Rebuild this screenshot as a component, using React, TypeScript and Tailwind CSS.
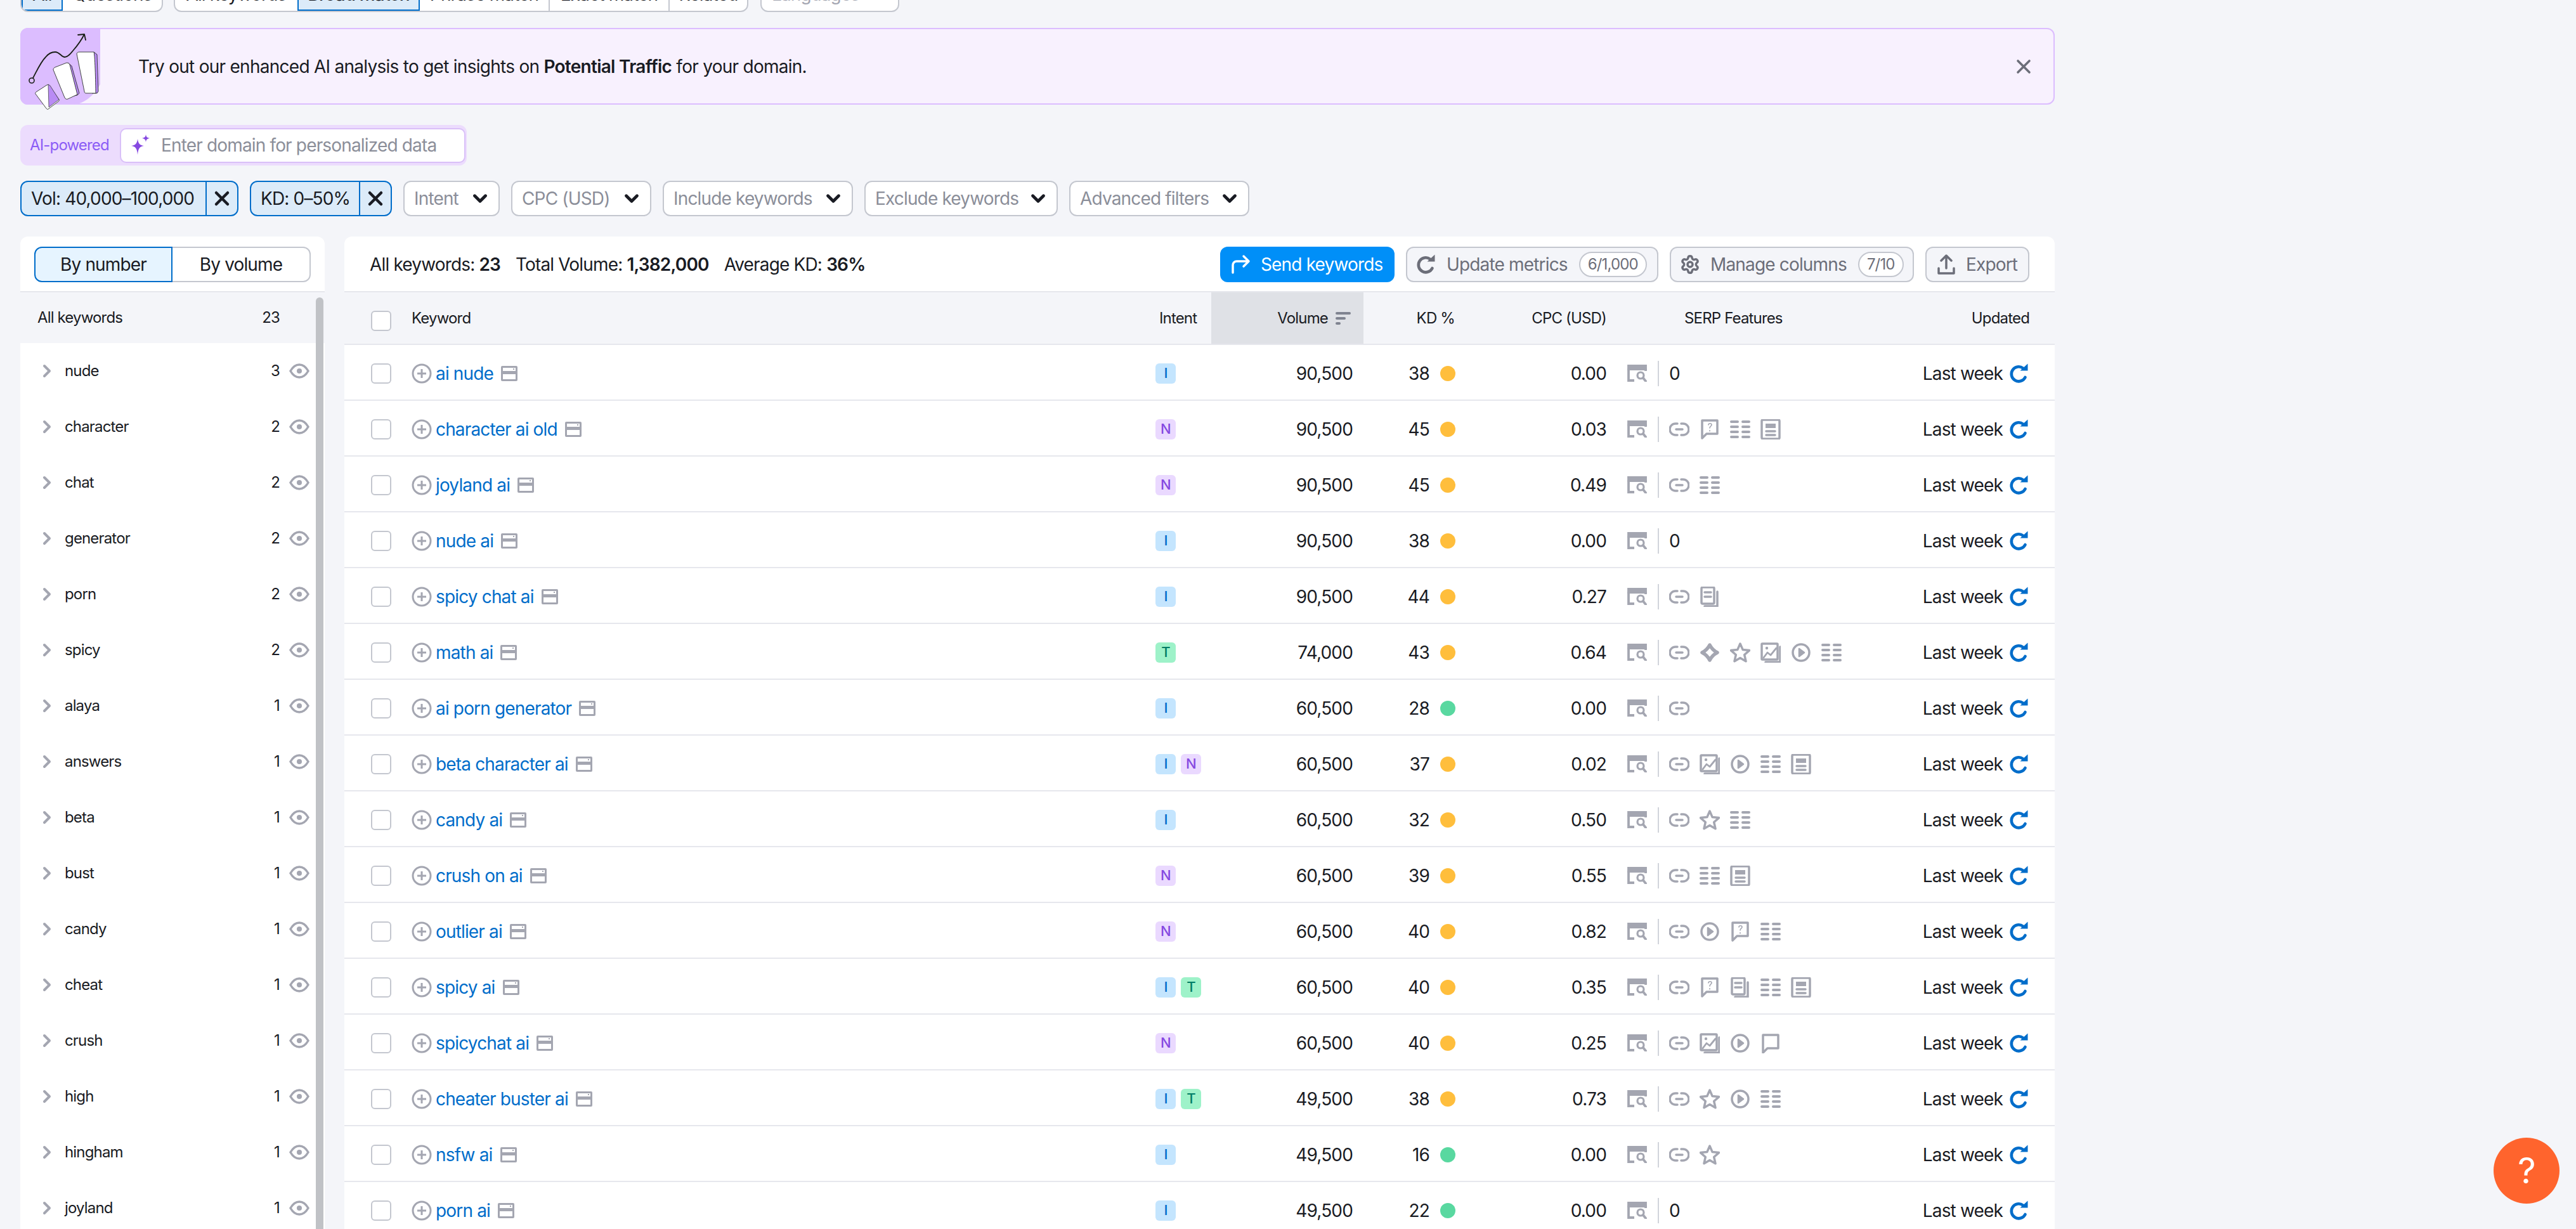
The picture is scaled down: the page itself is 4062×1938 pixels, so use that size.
import { ChevronDown, Settings, X } from 'lucide-react';

type Serp = 'link' | 'question' | 'list' | 'doc' | 'pages' | 'image' | 'play' | 'diamond' | 'star' | 'chat';

interface Row {
  keyword: string;
  intent: string[];
  volume: string;
  kd: number;
  cpc: string;
  serp: Serp[];
}

const rows: Row[] = [
  { keyword: 'ai nude', intent: ['I'], volume: '90,500', kd: 38, cpc: '0.00', serp: [] },
  { keyword: 'character ai old', intent: ['N'], volume: '90,500', kd: 45, cpc: '0.03', serp: ['link', 'question', 'list', 'doc'] },
  { keyword: 'joyland ai', intent: ['N'], volume: '90,500', kd: 45, cpc: '0.49', serp: ['link', 'list'] },
  { keyword: 'nude ai', intent: ['I'], volume: '90,500', kd: 38, cpc: '0.00', serp: [] },
  { keyword: 'spicy chat ai', intent: ['I'], volume: '90,500', kd: 44, cpc: '0.27', serp: ['link', 'pages'] },
  { keyword: 'math ai', intent: ['T'], volume: '74,000', kd: 43, cpc: '0.64', serp: ['link', 'diamond', 'star', 'image', 'play', 'list'] },
  { keyword: 'ai porn generator', intent: ['I'], volume: '60,500', kd: 28, cpc: '0.00', serp: ['link'] },
  { keyword: 'beta character ai', intent: ['I', 'N'], volume: '60,500', kd: 37, cpc: '0.02', serp: ['link', 'image', 'play', 'list', 'doc'] },
  { keyword: 'candy ai', intent: ['I'], volume: '60,500', kd: 32, cpc: '0.50', serp: ['link', 'star', 'list'] },
  { keyword: 'crush on ai', intent: ['N'], volume: '60,500', kd: 39, cpc: '0.55', serp: ['link', 'list', 'doc'] },
  { keyword: 'outlier ai', intent: ['N'], volume: '60,500', kd: 40, cpc: '0.82', serp: ['link', 'play', 'question', 'list'] },
  { keyword: 'spicy ai', intent: ['I', 'T'], volume: '60,500', kd: 40, cpc: '0.35', serp: ['link', 'question', 'pages', 'list', 'doc'] },
  { keyword: 'spicychat ai', intent: ['N'], volume: '60,500', kd: 40, cpc: '0.25', serp: ['link', 'image', 'play', 'chat'] },
  { keyword: 'cheater buster ai', intent: ['I', 'T'], volume: '49,500', kd: 38, cpc: '0.73', serp: ['link', 'star', 'play', 'list'] },
  { keyword: 'nsfw ai', intent: ['I'], volume: '49,500', kd: 16, cpc: '0.00', serp: ['link', 'star'] },
  { keyword: 'porn ai', intent: ['I'], volume: '49,500', kd: 22, cpc: '0.00', serp: [] },
];

const groups: [string, number][] = [
  ['nude', 3], ['character', 2], ['chat', 2], ['generator', 2], ['porn', 2], ['spicy', 2], ['alaya', 1], ['answers', 1],
  ['beta', 1], ['bust', 1], ['candy', 1], ['cheat', 1], ['crush', 1], ['high', 1], ['hingham', 1], ['joyland', 1],
];

const intentClass: Record<string, string> = {
  I: 'bg-[#c4e5fe] text-[#006dca]',
  N: 'bg-[#ead9ff] text-[#8649e1]',
  T: 'bg-[#9ef2c9] text-[#007c65]',
};

const rowGrid = 'grid grid-cols-[1279px_88px_240px_150px_233px_1fr_auto]';

function SerpIcon({ type }: { type: Serp }) {
  const gray = '#a4a6b1';
  return (
    <svg width="32" height="32" viewBox="0 0 32 32" fill="none" stroke={gray} strokeWidth="3.5" strokeLinecap="round" strokeLinejoin="round">
      {type === 'link' && (
        <>
          <path d="M13 7h-3a9 9 0 0 0 0 18h3" />
          <path d="M19 7h3a9 9 0 0 1 0 18h-3" />
          <path d="M11 16h10" />
        </>
      )}
      {type === 'question' && (
        <>
          <path d="M4 2h24v21H11l-7 7z" />
          <path d="M14 9c0-3 5-3 5 0 0 2-3 2-3 5" strokeWidth="1.6" />
          <path d="M16 18v.5" strokeWidth="1.8" />
        </>
      )}
      {type === 'chat' && <path d="M4 3h24v21H11l-7 7z" />}
      {type === 'list' && (
        <g strokeWidth="4">
          <path d="M2 4h10M20 4h10M2 12h10M20 12h10M2 20h10M20 20h10M2 28h10M20 28h10" />
        </g>
      )}
      {type === 'doc' && (
        <>
          <rect x="2" y="1" width="28" height="30" rx="2" />
          <rect x="8" y="7" width="16" height="7" fill={gray} stroke="none" />
          <path d="M9 19h14M9 25h14" />
        </>
      )}
      {type === 'pages' && (
        <>
          <rect x="3" y="1" width="20" height="26" rx="2" />
          <path d="M8 9h10M8 16h10" />
          <path d="M28 8v23H8" />
        </>
      )}
      {type === 'image' && (
        <>
          <rect x="2" y="2" width="25" height="25" fill="none" rx="1" />
          <path d="M5 24l6-8 5 4 9-11" strokeWidth="2.8" />
          <circle cx="10" cy="9" r="2.2" fill={gray} stroke="none" />
          <path d="M31 7v24H8" />
        </>
      )}
      {type === 'play' && (
        <>
          <circle cx="16" cy="16" r="13" />
          <path d="M13 10l8 6-8 6z" fill={gray} strokeWidth="2.5" />
        </>
      )}
      {type === 'diamond' && <path d="M16 4Q20 12 28 16 20 20 16 28 12 20 4 16 12 12 16 4z" strokeWidth="5.5" />}
      {type === 'star' && <path d="M16 2l4.200 9.600 10.300 1-7.800 6.900 2.300 10.200L16 24.400 7 29.700l2.300-10.200-7.800-6.900 10.300-1z" />}
    </svg>
  );
}

function SerpSearchIcon() {
  return (
    <svg width="31" height="27" viewBox="0 0 31 27" fill="none" stroke="#a4a6b1" strokeWidth="3.8" className="shrink-0">
      <path d="M2 2h27v5H2z" fill="#a4a6b1" />
      <path d="M2 6v19h9" />
      <path d="M29 6v4" />
      <circle cx="21" cy="17" r="5" strokeWidth="3.2" />
      <path d="M25 21l4 5" strokeLinecap="round" />
    </svg>
  );
}

function Refresh({ color = '#006dca', size = 30, stroke = 4.6 }: { color?: string; size?: number; stroke?: number }) {
  return (
    <svg width={size} height={size} viewBox="0 0 30 30" fill="none" stroke={color} strokeWidth={stroke} className="shrink-0 overflow-visible">
      <path d="M22 6.500A11.500 11.500 0 1 0 25.500 21" strokeLinecap="round" />
      <path d="M17.500 10.500H29.500V-.5z" fill={color} stroke="none" />
    </svg>
  );
}

function WindowIcon() {
  return (
    <svg width="26" height="24" viewBox="0 0 26 24" className="shrink-0">
      <rect width="26" height="24" rx="2" fill="#a4a6b1" />
      <rect x="3" y="3" width="20" height="5" fill="#fff" />
      <rect x="19" y="4" width="2" height="2" fill="#a4a6b1" />
      <rect x="3" y="13" width="20" height="8" fill="#fff" />
    </svg>
  );
}

function PlusIcon() {
  return (
    <svg width="32" height="32" viewBox="0 0 32 32" fill="none" stroke="#a4a6b1" strokeWidth="3" className="shrink-0">
      <circle cx="16" cy="16" r="14" />
      <path d="M16 9v14M9 16h14" />
    </svg>
  );
}

function EyeIcon() {
  return (
    <svg width="32" height="24" viewBox="0 0 32 24" fill="none" stroke="#a4a6b1" strokeWidth="3.500" className="shrink-0">
      <path d="M2 12C6 5 11 2 16 2s10 3 14 10c-4 7-9 10-14 10S6 19 2 12z" />
      <circle cx="16" cy="12" r="4" fill="#a4a6b1" stroke="none" />
    </svg>
  );
}

function Checkbox() {
  return <span className="block h-[32px] w-[32px] shrink-0 rounded-[6px] border-2 border-[#c4c7cf] bg-white" />;
}

function BannerArt() {
  return (
    <svg width="126" height="121" viewBox="0 0 126 121" fill="none" className="shrink-0 overflow-visible">
      <path d="M0 12A12 12 0 0 1 12 0h114v89c-10 18-25 30-41 32H12a12 12 0 0 1-12-12z" fill="#dcbdff" />
      <circle cx="18" cy="83" r="4" stroke="#181e15" strokeWidth="1.6" />
      <path d="M20 79C26 68 32 54 40 46c4-5 9-8 15-8 7 0 10 8 15 8 5 0 9-5 13-10 7-8 13-16 18-26M91 11l10-1 2 9" stroke="#181e15" strokeWidth="1.8" strokeLinecap="round" strokeLinejoin="round" />
      <path d="M116 38l5 4 2 58-2 3h-8z" fill="#b98bf4" stroke="#181e15" strokeWidth="0.8" />
      <path d="M89 41c0-2 2-3 4-3h23c2 5 3 60 3 65h-15c-2 0-3-1-3-3z" fill="#fff" stroke="#181e15" strokeWidth="0.8" />
      <path d="M75 55l6 5 12 43-3 3-10 2z" fill="#b98bf4" stroke="#181e15" strokeWidth="0.8" />
      <path d="M52 66c0-2 1-3 3-4l18-7c3 0 4 1 5 3l12 47-15 7c-2 1-4 0-5-2z" fill="#fff" stroke="#181e15" strokeWidth="0.8" />
      <path d="M24 104c-1-1 0-2 1-3l17-11c2-1 3 0 4 1l15 22c1 1 0 2-1 3l-16 12c-1 1-2 0-3-1z" fill="#fff" stroke="#181e15" strokeWidth="0.8" />
      <path d="M44 89l3 2 14 22-16 12z" fill="#b98bf4" stroke="#181e15" strokeWidth="0.6" />
    </svg>
  );
}

export default function App() {
  return (
    <div className="h-screen overflow-hidden whitespace-nowrap bg-[#f4f5f9] [font-family:Inter,sans-serif] text-[28px] tracking-[-0.03em] text-[#191b23]">
      <div className="relative -mt-[37px] ml-[32px] flex w-[3208px] flex-col">
        {/* tabs, mostly scrolled out of view */}
        <div className="flex h-[56px] items-center">
          <div className="flex h-full w-[225px] overflow-hidden rounded-[12px] border-2 border-[#c4c7cf] bg-white">
            <span className="flex w-[65px] items-center justify-center border-2 border-[#006dca] bg-[#dcebf9]">All</span>
            <span className="flex flex-1 items-center justify-center">Questions</span>
          </div>
          <div className="ml-[17px] flex h-full w-[906px] overflow-hidden rounded-[12px] border-2 border-[#c4c7cf] bg-white">
            <span className="flex w-[193px] items-center justify-center">All keywords</span>
            <span className="flex w-[193px] items-center justify-center border-2 border-[#006dca] bg-[#dcebf9] font-medium">Broad match</span>
            <span className="flex w-[205px] items-center justify-center border-r-2 border-[#c4c7cf]">Phrase match</span>
            <span className="flex w-[189px] items-center justify-center border-r-2 border-[#c4c7cf]">Exact match</span>
            <span className="flex flex-1 items-center justify-center">Related</span>
          </div>
          <div className="ml-[19px] flex h-full w-[219px] items-center rounded-[12px] border-2 border-[#c4c7cf] bg-white pl-[16px] text-[#a4a6b1]">Languages</div>
        </div>

        <div className="mt-[25px] flex h-[121px] items-center rounded-[12px] border-2 border-[#dcbdff] bg-[#f8f1fe] pr-[29px]">
          <div className="-my-[2px] -ml-[2px]">
            <BannerArt />
          </div>
          <p className="ml-[60px] flex-1 tracking-[-0.026em]">
            Try out our enhanced AI analysis to get insights on <b className="font-semibold">Potential Traffic</b> for your domain.
          </p>
          <X size={36} strokeWidth={2.4} className="text-[#6c6e79]" />
        </div>

        <div className="mt-[32px] flex h-[64px] w-[704px] items-center rounded-[12px] bg-[#ecdcfd] pl-[15px] pr-[2px]">
          <span className="w-[142px] text-[24px] text-[#8b5cf6]">AI-powered</span>
          <div className="flex h-[55px] flex-1 items-center rounded-[10px] border-2 border-[#d9c0f8] bg-white pl-[16px] text-[#8b8e99]">
            <svg width="30" height="34" viewBox="0 0 30 34" fill="#8649e1" className="shrink-0">
              <path d="M10 7c1 7 3 10 10 11-7 1-9 4-10 14C9 22 7 19 0 18c7-1 9-4 10-11z" />
              <path d="M23 0c.5 4 2 5 6 6-4 .8-5.500 2-6 6-.5-4-2-5.200-6-6 4-1 5.500-2 6-6z" />
            </svg>
            <span className="ml-[17px]">Enter domain for personalized data</span>
          </div>
        </div>

        <div className="mt-[24px] flex h-[56px] gap-[18px]">
          <div className="flex w-[344px] rounded-[12px] border-2 border-[#006dca] bg-[#dcebf9]">
            <span className="flex flex-1 items-center pl-[15px]">Vol: 40,000–100,000</span>
            <span className="flex w-[50px] items-center justify-center border-l-2 border-[#006dca]">
              <X size={36} strokeWidth={3} />
            </span>
          </div>
          <div className="flex w-[224px] rounded-[12px] border-2 border-[#006dca] bg-[#dcebf9]">
            <span className="flex flex-1 items-center pl-[15px]">KD: 0–50%</span>
            <span className="flex w-[50px] items-center justify-center border-l-2 border-[#006dca]">
              <X size={36} strokeWidth={3} />
            </span>
          </div>
          {[
            ['Intent', 'w-[152px]'],
            ['CPC (USD)', 'w-[221px]'],
            ['Include keywords', 'w-[300px]'],
            ['Exclude keywords', 'w-[305px]'],
            ['Advanced filters', 'w-[284px]'],
          ].map(([label, width]) => (
            <div key={label} className={`flex items-center justify-between rounded-[12px] border-2 border-[#c4c7cf] bg-white pl-[15px] pr-[12px] text-[#8b8e99] ${width}`}>
              <span>{label}</span>
              <ChevronDown size={34} strokeWidth={3.4} className="text-[#191b23]" />
            </div>
          ))}
        </div>

        <div className="mt-[32px] flex gap-[31px]">
          {/* keyword groups */}
          <div className="relative w-[480px] shrink-0 overflow-hidden rounded-t-[12px] bg-white text-[24px]">
            <div className="flex h-[88px] items-start border-b-2 border-[#e6e7ed] pl-[22px] pt-[16px]">
              <div className="flex h-[56px] w-[436px] text-[28px]">
                <span className="flex w-[218px] items-center justify-center rounded-l-[12px] border-2 border-[#006dca] bg-[#e6f4ff]">By number</span>
                <span className="flex flex-1 items-center justify-center rounded-r-[12px] border-y-2 border-r-2 border-[#c4c7cf]">By volume</span>
              </div>
            </div>
            <div className="flex h-[80px] items-center bg-[#f4f5f9] pl-[27px] pr-[71px]">
              <span className="flex-1">All keywords</span>
              <span>23</span>
            </div>
            {groups.map(([name, count]) => (
              <div key={name} className="flex h-[88px] items-center pl-[35px] pr-[24px]">
                <svg width="14" height="22" viewBox="0 0 14 22" fill="none" stroke="#a4a6b1" strokeWidth="4" strokeLinecap="round" strokeLinejoin="round" className="shrink-0">
                  <path d="M3 3l8 8-8 8" />
                </svg>
                <span className="ml-[21px] flex-1">{name}</span>
                <span className="mr-[15px]">{count}</span>
                <EyeIcon />
              </div>
            ))}
            <div className="absolute bottom-0 right-[2px] top-[96px] w-[12px] rounded-t-full bg-[#c0c2c6]" />
          </div>

          {/* keyword table */}
          <div className="w-[2697px] shrink-0 overflow-hidden rounded-t-[12px] bg-white">
            <div className="flex h-[88px] items-start justify-between border-b-2 border-[#e6e7ed] pl-[40px] pr-[40px] pt-[16px]">
              <div className="flex h-[56px] items-center gap-[24px]">
                <span>All keywords: <b className="font-semibold">23</b></span>
                <span>Total Volume: <b className="font-semibold">1,382,000</b></span>
                <span>Average KD: <b className="font-semibold">36%</b></span>
              </div>
              <div className="flex h-[56px] gap-[18px] text-[#6c6e79]">
                <div className="flex w-[275px] items-center rounded-[12px] bg-[#008ff8] pl-[16px] text-white">
                  <svg width="32" height="32" viewBox="0 0 32 32" fill="none" stroke="#fff" strokeWidth="3.5" strokeLinecap="round" strokeLinejoin="round" className="shrink-0">
                    <path d="M4 29V17a6 6 0 0 1 6-6h18M21 3l8 8-8 8" />
                  </svg>
                  <span className="ml-[16px]">Send keywords</span>
                </div>
                <div className="flex w-[398px] items-center rounded-[12px] border-2 border-[#c4c7cf] bg-[#f4f5f9] pl-[14px]">
                  <Refresh color="#6c6e79" />
                  <span className="ml-[18px]">Update metrics</span>
                  <span className="ml-[18px] flex h-[40px] items-center rounded-full border-2 border-[#c4c7cf] bg-white px-[12px] text-[24px]">6/1,000</span>
                </div>
                <div className="flex w-[385px] items-center rounded-[12px] border-2 border-[#c4c7cf] bg-[#f4f5f9] pl-[14px]">
                  <Settings size={32} strokeWidth={2.6} />
                  <span className="ml-[16px]">Manage columns</span>
                  <span className="ml-[18px] flex h-[40px] items-center rounded-full border-2 border-[#c4c7cf] bg-white px-[12px] text-[24px]">7/10</span>
                </div>
                <div className="flex w-[164px] items-center rounded-[12px] border-2 border-[#c4c7cf] bg-[#f4f5f9] pl-[16px]">
                  <svg width="30" height="32" viewBox="0 0 30 32" fill="none" stroke="#6c6e79" strokeWidth="3.5" strokeLinecap="round" strokeLinejoin="round" className="shrink-0">
                    <path d="M15 22V3M7 10l8-8 8 8M3 22v8h24v-8" />
                  </svg>
                  <span className="ml-[16px]">Export</span>
                </div>
              </div>
            </div>

            <div className={`${rowGrid} h-[83px] items-center border-b-2 border-[#e6e7ed] bg-[#f4f5f9] text-[24px]`}>
              <div className="flex items-center pl-[42px]">
                <span className="mt-[8px]">
                  <Checkbox />
                </span>
                <span className="ml-[32px]">Keyword</span>
              </div>
              <span className="pl-[6px]">Intent</span>
              <div className="flex h-full items-center justify-end bg-[#dfe1e6] pr-[20px]">
                <span>Volume</span>
                <svg width="24" height="22" viewBox="0 0 24 22" fill="#7f8390" className="ml-[12px]">
                  <rect width="24" height="4" rx="2" y="1" />
                  <rect width="16" height="4" rx="2" y="9" />
                  <rect width="8" height="4" rx="2" y="17" />
                </svg>
              </div>
              <span className="pr-[6px] text-right">KD %</span>
              <span className="text-right">CPC (USD)</span>
              <span className="pl-[123px]">SERP Features</span>
              <span className="pr-[40px] text-right">Updated</span>
            </div>

            {rows.map((row) => (
              <div key={row.keyword} className={`${rowGrid} h-[88px] items-center border-b-2 border-[#e6e7ed] pt-[3px]`}>
                <div className="flex items-center pl-[42px]">
                  <Checkbox />
                  <span className="ml-[32px]">
                    <PlusIcon />
                  </span>
                  <span className="ml-[6px] text-[#006dca]">{row.keyword}</span>
                  <span className="ml-[12px]">
                    <WindowIcon />
                  </span>
                </div>
                <div className="flex gap-[8px]">
                  {row.intent.map((item) => (
                    <span key={item} className={`flex h-[32px] w-[32px] items-center justify-center rounded-[6px] text-[22px] font-medium ${intentClass[item]}`}>
                      {item}
                    </span>
                  ))}
                </div>
                <span className="pr-[17px] text-right">{row.volume}</span>
                <div className="flex items-center justify-end pr-[5px]">
                  <span>{row.kd}</span>
                  <span className={`ml-[17px] h-[24px] w-[24px] rounded-full ${row.kd < 30 ? 'bg-[#59d8a0]' : 'bg-[#ffbe3c]'}`} />
                </div>
                <span className="text-right">{row.cpc}</span>
                <div className="flex items-center pl-[33px]">
                  <SerpSearchIcon />
                  <div className="ml-[17px] h-[40px] w-[2px] bg-[#d1d4db]" />
                  <div className="ml-[16px] flex items-center gap-[16px]">
                    {row.serp.length === 0 ? <span>0</span> : row.serp.map((type, i) => <SerpIcon key={i} type={type} />)}
                  </div>
                </div>
                <div className="flex items-center justify-end pr-[42px]">
                  <span>Last week</span>
                  <span className="ml-[10px]">
                    <Refresh />
                  </span>
                </div>
              </div>
            ))}
          </div>
        </div>
      </div>

      <div className="fixed bottom-[40px] right-[26px] flex h-[104px] w-[104px] items-center justify-center rounded-full bg-[#ff642d] text-[56px] font-normal text-white">?</div>
    </div>
  );
}
